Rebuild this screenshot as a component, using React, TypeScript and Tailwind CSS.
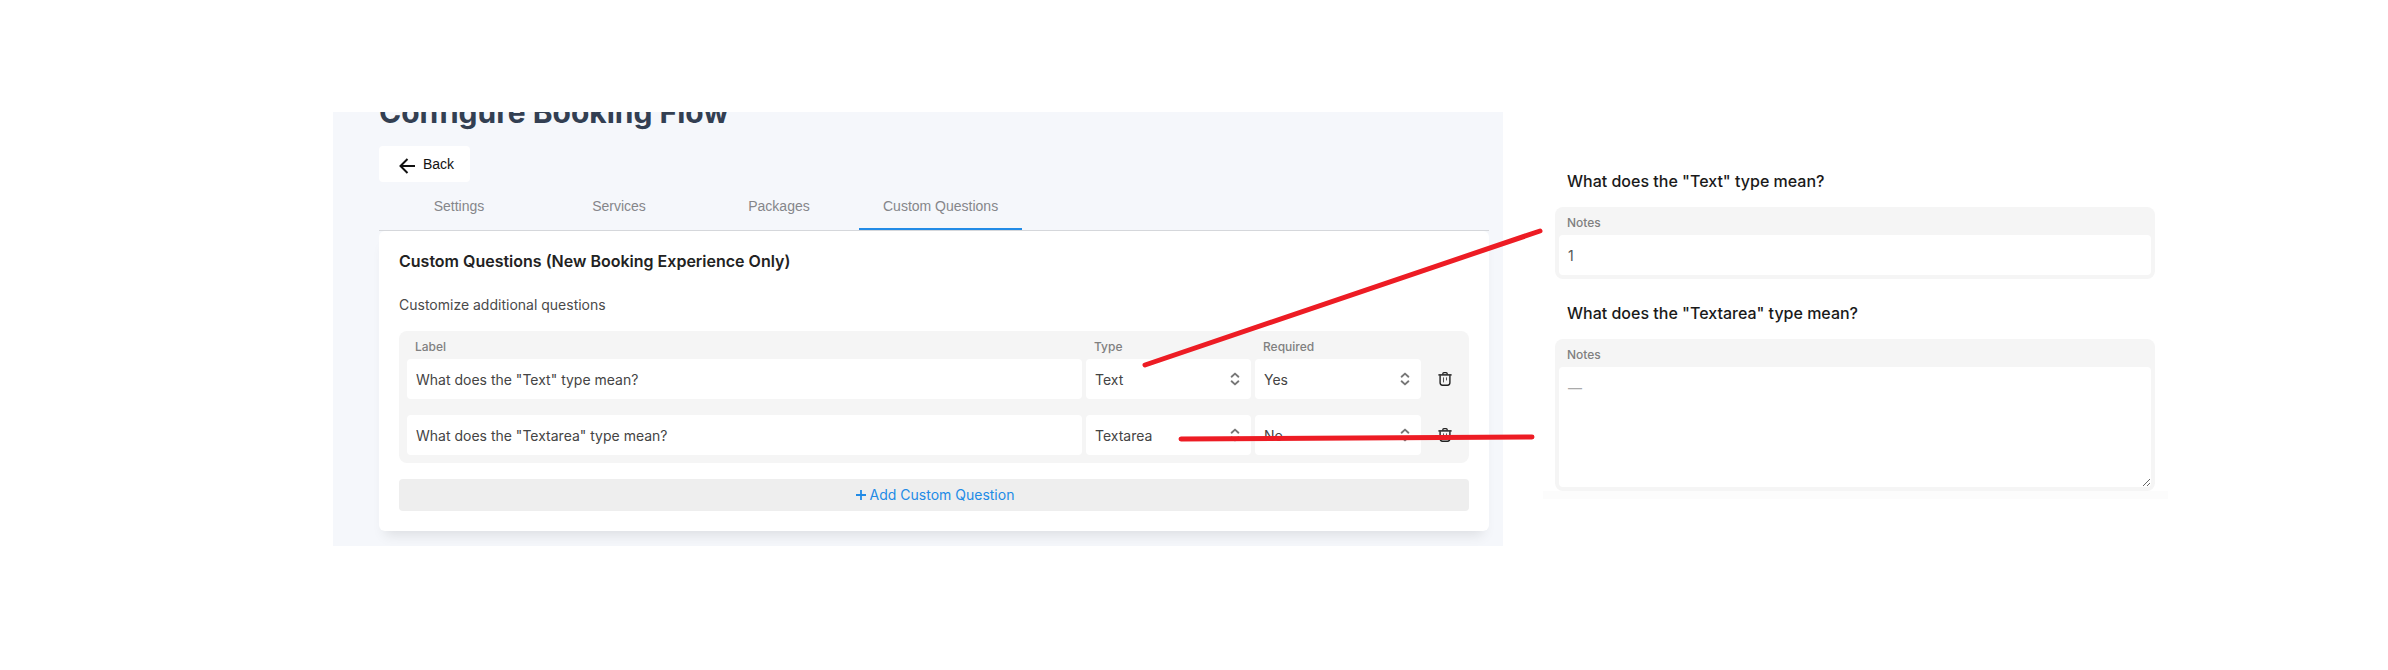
import type { ReactNode } from 'react';

type Question = { id: string; label: string; type: string; required: string };

const tabs = ['Settings', 'Services', 'Packages', 'Custom Questions'];

const questions: Question[] = [
  { id: 'q1', label: 'What does the "Text" type mean?', type: 'Text', required: 'Yes' },
  { id: 'q2', label: 'What does the "Textarea" type mean?', type: 'Textarea', required: 'No' },
];

function ArrowLeft() {
  return (
    <svg className="h-4 w-4" viewBox="0 0 16 16" fill="none" stroke="#111" strokeWidth="2" aria-hidden="true">
      <path d="M16 8H1.5M8.5 1L1.5 8l7 7" />
    </svg>
  );
}

function SelectorIcon() {
  return (
    <svg
      className="pointer-events-none absolute right-3 top-[13px] h-3.5 w-2"
      viewBox="0 0 8 14"
      fill="none"
      stroke="#777"
      strokeWidth="1.9"
      strokeLinecap="round"
      strokeLinejoin="round"
      overflow="visible"
      aria-hidden="true"
    >
      <path d="M.6 4.7L4 1.6l3.4 3.1M.6 9.3L4 12.4l3.4-3.1" />
    </svg>
  );
}

function TrashIcon() {
  return (
    <svg className="h-3.5 w-3.5" viewBox="0 0 14 14" fill="none" stroke="#222" aria-hidden="true">
      <path d="M.4 2.9h13.2" strokeWidth="1.5" />
      <path d="M4.8 2.6V1.8q0-1.1 1.1-1.1h2.2q1.1 0 1.1 1.1v.8" strokeWidth="1.3" />
      <path d="M2.1 3.2v7.6q0 2.4 2.4 2.4h5q2.4 0 2.4-2.4V3.2" strokeWidth="1.4" />
      <path d="M5.5 5.4v5M8.5 5.4v3" strokeWidth="1" stroke="#555" />
    </svg>
  );
}

function SelectBox({ name, value, options }: { name: string; value: string; options: string[] }) {
  return (
    <div className="relative">
      <select
        aria-label={name}
        defaultValue={value}
        className="block h-10 w-full appearance-none rounded bg-white pl-[9px] pr-7 pt-0.5 text-sm text-[#444] outline-none"
      >
        {options.map((o) => (
          <option key={o}>{o}</option>
        ))}
      </select>
      <SelectorIcon />
    </div>
  );
}

function QuestionTable() {
  return (
    <div className="rounded-lg bg-[#f5f5f5] pl-2">
      <table className="w-full table-fixed border-collapse">
        <colgroup>
          <col />
          <col className="w-[169px]" />
          <col className="w-[170px]" />
          <col className="w-11" />
        </colgroup>
        <thead>
          <tr className="h-7 text-left text-xs text-[#808080]">
            <th className="px-2 pt-1 font-medium">Label</th>
            <th className="px-2 pt-1 font-medium">Type</th>
            <th className="px-2 pt-1 font-medium">Required</th>
            <th className="p-0">
              <span className="sr-only">Delete</span>
            </th>
          </tr>
        </thead>
        <tbody>
          {questions.map((q, i) => {
            const gap = i === questions.length - 1 ? 'pb-2' : 'pb-4';
            return (
              <tr key={q.id}>
                <td className={`pr-1 ${gap}`}>
                  <input
                    aria-label="Label"
                    defaultValue={q.label}
                    className="block h-10 w-full rounded bg-white px-[9px] text-sm text-[#444] outline-none"
                  />
                </td>
                <td className={`pr-1 ${gap}`}>
                  <SelectBox name="Type" value={q.type} options={['Text', 'Textarea']} />
                </td>
                <td className={`pr-1 ${gap}`}>
                  <SelectBox name="Required" value={q.required} options={['Yes', 'No']} />
                </td>
                <td className={gap}>
                  <button type="button" aria-label="Delete question" className="flex h-10 w-10 items-center justify-center">
                    <TrashIcon />
                  </button>
                </td>
              </tr>
            );
          })}
        </tbody>
      </table>
    </div>
  );
}

function BookingFlow() {
  return (
    <section className="bg-[#f5f7fb] pb-[15px] pl-[46px] pr-[14px]">
      <div className="flex h-[34px] items-end overflow-hidden pb-4">
        <h1 className="text-3xl font-bold text-[#333f52]">Configure Booking Flow</h1>
      </div>
      <button
        type="button"
        className="flex h-9 items-center gap-2 rounded bg-white pl-5 pr-4 font-[Liberation_Sans,Arial,sans-serif] text-sm text-[#111]"
      >
        <span className="pt-1">
          <ArrowLeft />
        </span>
        Back
      </button>
      <div role="tablist" className="flex border-b border-[#d5d7db] font-[Liberation_Sans,Arial,sans-serif] text-sm text-[#85868a]">
        {tabs.map((t) => {
          const active = t === 'Custom Questions';
          return (
            <button
              key={t}
              type="button"
              role="tab"
              aria-selected={active}
              className={`h-12 min-w-40 border-b-2 px-6 pt-0.5 ${active ? 'border-[#228be6]' : 'border-transparent'}`}
            >
              {t}
            </button>
          );
        })}
      </div>
      <div className="rounded-md bg-white px-5 pt-[18px] pb-5 shadow-[0_10px_12px_-6px_rgba(0,0,0,0.1)]">
        <h2 className="text-base leading-6 font-semibold text-[#222]">Custom Questions (New Booking Experience Only)</h2>
        <p className="mt-[22px] mb-4 text-sm leading-5 text-[#4a4a4a]">Customize additional questions</p>
        <QuestionTable />
        <button
          type="button"
          className="mt-4 flex h-8 w-full items-center justify-center gap-1 rounded bg-[#eee] pl-0.5 text-sm text-[#228be6]"
        >
          <svg className="h-2.5 w-2.5" viewBox="0 0 10 10" fill="none" stroke="currentColor" strokeWidth="1.8" aria-hidden="true">
            <path d="M5 0v10M0 5h10" />
          </svg>
          Add Custom Question
        </button>
      </div>
    </section>
  );
}

function NoteField({ title, id, children }: { title: string; id: string; children: ReactNode }) {
  return (
    <div>
      <h3 className="px-3 text-base leading-6 font-medium text-[#1a1a1a]">{title}</h3>
      <div className="mt-[14px] rounded-lg bg-[#f5f5f5] px-1 pb-1">
        <label htmlFor={id} className="flex h-7 items-center px-2 pt-1 text-xs font-medium text-[#808080]">
          Notes
        </label>
        {children}
      </div>
    </div>
  );
}

function Preview() {
  return (
    <section className="flex flex-col gap-[22px] self-start border-b-8 border-[#fcfcfc] pl-3 pr-[13px] pt-[57px]">
      <NoteField title={'What does the "Text" type mean?'} id="notes-text">
        <input
          id="notes-text"
          defaultValue="1"
          className="block h-10 w-full rounded bg-white px-[9px] text-sm text-[#555] outline-none"
        />
      </NoteField>
      <NoteField title={'What does the "Textarea" type mean?'} id="notes-area">
        <textarea
          id="notes-area"
          placeholder="—"
          className="block h-[120px] w-full rounded bg-white px-[9px] py-[11px] text-sm leading-5 outline-none placeholder:text-[#aaa]"
        />
      </NoteField>
    </section>
  );
}

export default function App() {
  return (
    <main className="bg-white pt-28 pr-[220px] pb-[124px] pl-[333px] font-[Inter,sans-serif]">
      <div className="relative grid grid-cols-[1170fr_625fr] gap-10">
        <BookingFlow />
        <Preview />
        <svg
          className="pointer-events-none absolute inset-0 h-full w-full"
          viewBox="0 0 1835 434"
          preserveAspectRatio="none"
          fill="none"
          stroke="#ed1c24"
          strokeWidth="5"
          strokeLinecap="round"
          aria-hidden="true"
        >
          <path d="M812 253L1207 119M848 327L1199 325" />
        </svg>
      </div>
    </main>
  );
}
